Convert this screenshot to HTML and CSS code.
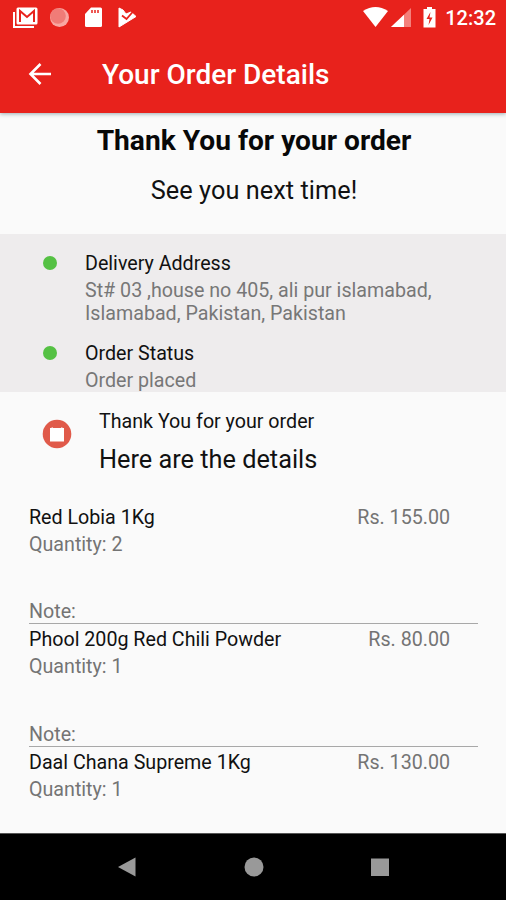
FILE: index.html
```html
<!DOCTYPE html>
<html lang="en">
<head>
<meta charset="utf-8">
<title>Your Order Details</title>
<link rel="stylesheet" href="styles.css">
</head>
<body>
<div class="screen">
  <header class="top">
    <div class="status">
      <svg class="status-left" width="150" height="36" viewBox="0 0 150 36">
        <path d="M14 12v15h20" fill="none" stroke="#fff" stroke-width="2"/>
        <rect x="16.500" y="7.500" width="21" height="17" rx="1.500" fill="#fff"/>
        <path d="M20 22V11l7 6 7-6v11" fill="none" stroke="#e8221c" stroke-width="2"/>
        <circle cx="59.500" cy="17.500" r="9.500" fill="#f9a7a2"/>
        <circle cx="58" cy="16" r="7.800" fill="#f07c77"/>
        <path d="M91 7.500h9.500q1.500 0 1.500 1.500v16.500q0 1.500-1.500 1.500H86.500q-1.500 0-1.500-1.500V14z" fill="#fff"/>
        <path d="M92 10v3M95 10v3M98 10v3" stroke="#e8221c" stroke-width="1.500"/>
        <path d="M119 8l4 2 3 4 5-2 5 4.500-17 10.500z" fill="#fff" stroke="#fff" stroke-linejoin="round"/>
        <path d="M122 15.500l4.500 3.500 7-8" fill="none" stroke="#e8221c" stroke-width="1.800"/>
      </svg>
      <div class="status-right">
        <svg width="76" height="36" viewBox="0 0 76 36">
          <path d="M2 11q12.500-8 25 0L14.500 27z" fill="#fff"/>
          <path d="M50 8v19H30z" fill="#f4807b"/>
          <path d="M43 14.650V27H30z" fill="#fff"/>
          <path d="M66 7h5v2h3.500v18.500h-12V9H66z" fill="#fff"/>
          <path d="M69.500 12l-4 7h3l-1 6 4-7.500h-3z" fill="#e8221c"/>
        </svg>
        <span class="clock">12:32</span>
      </div>
    </div>
    <div class="appbar">
      <svg class="back" width="24" height="24" viewBox="0 0 24 24"><path d="M23 12H2.500M12.500 2L2.500 12l10 10" fill="none" stroke="#fff" stroke-width="2.600"/></svg>
      <h1 class="title">Your Order Details</h1>
    </div>
  </header>
  <main class="content">
    <section class="thanks">
      <h2 class="thanks-title">Thank You for your order</h2>
      <p class="thanks-sub">See you next time!</p>
    </section>
    <section class="info">
      <div class="info-row">
        <span class="dot"></span>
        <div class="info-text">
          <div class="label">Delivery Address</div>
          <div class="value">St# 03 ,house no 405, ali pur islamabad,<br>Islamabad, Pakistan, Pakistan</div>
        </div>
      </div>
      <div class="info-row">
        <span class="dot"></span>
        <div class="info-text">
          <div class="label">Order Status</div>
          <div class="value">Order placed</div>
        </div>
      </div>
    </section>
    <section class="details">
      <svg class="badge" width="30" height="30" viewBox="0 0 30 30"><circle cx="15" cy="15" r="14.300" fill="#e05a4a"/><path d="M8 9h1.500V8.500H11V9h8v-.5h1.500V9H22v13.500H8z" fill="#fff"/></svg>
      <div>
        <div class="label">Thank You for your order</div>
        <div class="details-title">Here are the details</div>
      </div>
    </section>
    <ul class="items">
      <li class="item">
        <div class="item-head"><span class="label">Red Lobia 1Kg</span><span class="price">Rs. 155.00</span></div>
        <div class="qty">Quantity: 2</div>
        <div class="note">Note:</div>
      </li>
      <li class="item">
        <div class="item-head"><span class="label">Phool 200g Red Chili Powder</span><span class="price">Rs. 80.00</span></div>
        <div class="qty">Quantity: 1</div>
        <div class="note note-last">Note:</div>
      </li>
      <li class="item">
        <div class="item-head"><span class="label">Daal Chana Supreme 1Kg</span><span class="price">Rs. 130.00</span></div>
        <div class="qty">Quantity: 1</div>
      </li>
    </ul>
  </main>
  <nav class="navbar">
    <svg width="20" height="20" viewBox="0 0 20 20"><path d="M18.500 .5v19L1 10z" fill="#999"/></svg>
    <svg width="20" height="20" viewBox="0 0 20 20"><circle cx="10" cy="10" r="9.500" fill="#999"/></svg>
    <svg width="20" height="20" viewBox="0 0 20 20"><path d="M1 1.500h18v17.500H1z" fill="#999"/></svg>
  </nav>
</div>
</body>
</html>
```

FILE: styles.css
```css
* { box-sizing: border-box; }
body { margin: 0; font-family: Roboto, "Liberation Sans", sans-serif; }
h1, h2, p, ul { margin: 0; padding: 0; }
ul { list-style: none; }
svg { display: block; flex: none; }
.screen {
  width: 506px;
  height: 900px;
  display: flex;
  flex-direction: column;
  overflow: hidden;
  background: #fafafa;
  color: #111;
  font-size: 19.67px;
  line-height: 23px;
}
.top {
  height: 113px;
  flex: none;
  background: #e8221c;
  color: #fff;
  box-shadow: 0 1px 4px rgba(40, 80, 90, 0.45);
  z-index: 1;
}
.status { display: flex; justify-content: space-between; height: 36px; }
.status-right { display: flex; padding-right: 10px; gap: 8px; }
.clock { font-size: 20px; font-weight: 500; line-height: 37px; }
.appbar { display: flex; align-items: center; height: 77px; padding-left: 28px; gap: 50px; }
.title { font-size: 28px; font-weight: 500; line-height: 32px; margin-top: 1px; }
.back { margin-top: -2px; }
.content { flex: 1; min-height: 0; overflow: hidden; }
.thanks { height: 121px; padding: 11px 0 0 2px; text-align: center; }
.thanks-title { font-size: 28.15px; font-weight: 700; line-height: 33px; color: #080808; }
.thanks-sub { font-size: 25.3px; line-height: 30px; margin-top: 19px; letter-spacing: 0.05px; }
.info { height: 158px; padding: 18px 0 0 43px; background: #eeeced; display: flex; flex-direction: column; gap: 17px; }
.info-row { display: flex; gap: 28px; }
.dot { width: 14px; height: 14px; margin-top: 4px; border-radius: 50%; background: #55c144; flex: none; }
.value { margin-top: 4px; color: #777; white-space: nowrap; }
.details { display: flex; gap: 27px; height: 114px; padding: 18px 0 0 42px; }
.badge { margin-top: 9px; }
.details-title { font-size: 25.3px; line-height: 30px; margin-top: 12px; }
.items { padding: 0 28px 0 29px; }
.item { height: 122.3px; }
.item-head { display: flex; justify-content: space-between; padding-right: 28px; }
.price, .qty, .note { color: #747474; }
.qty { margin-top: 4px; }
.note { margin-top: 44px; height: 24px; border-bottom: 1px solid #a8a8a8; }
.note-last { margin-top: 45px; }
.navbar { display: flex; justify-content: space-between; align-items: center; height: 67px; flex: none; padding: 0 116px 0 117px; background: #000; border-top: 1px solid #555; }
```
